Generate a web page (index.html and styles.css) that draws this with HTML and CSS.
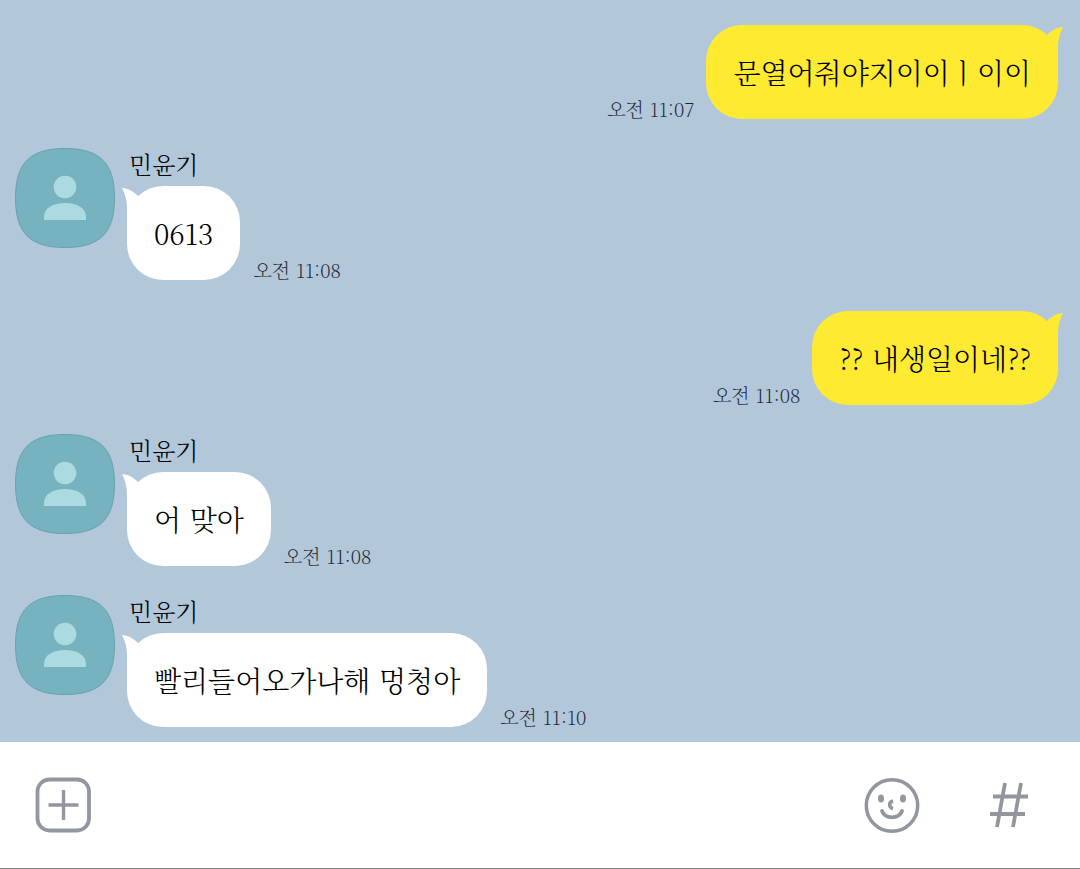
FILE: index.html
```html
<!DOCTYPE html>
<html lang="ko">
<head>
  <meta charset="UTF-8" />
  <meta name="viewport" content="width=device-width, initial-scale=1" />
  <title>민윤기</title>
  <link rel="stylesheet" href="styles.css">
</head>
<body>
  <!-- shared shapes -->
  <svg class="defs" width="0" height="0" aria-hidden="true">
    <symbol id="person" viewBox="0 0 100 100">
      <path d="M50 .5C85 .5 99.5 15 99.5 50S85 99.5 50 99.5S.5 85 .5 50S15 .5 50 .5Z" fill="#76b3bf" stroke="#68a1b0" />
      <circle cx="50" cy="39" r="11.3" fill="#abdae0" />
      <path d="M29 72V69C29 60 38 55 50 55S71 60 71 69V72Z" fill="#abdae0" />
    </symbol>
    <symbol id="tail-left" viewBox="0 0 20 36">
      <path d="M0 0C6 0 12 4 16 8L20 14V36H5V20C5 12 3 6 0 0Z" fill="#fff" />
    </symbol>
    <symbol id="tail-right" viewBox="0 0 20 36">
      <path d="M20 0C14 0 8 4 4 8L0 14V36H15V20C15 12 17 6 20 0Z" fill="#ffea32" />
    </symbol>
  </svg>

  <main class="chat">
    <div class="message mine">
      <time>오전 11:07</time>
      <p class="bubble">문열어줘야지이이ㅣ이이<svg class="tail"><use href="#tail-right" /></svg></p>
    </div>

    <div class="message">
      <svg class="avatar"><use href="#person" /></svg>
      <div class="body">
        <div class="name">민윤기</div>
        <div class="line">
          <p class="bubble">0613<svg class="tail"><use href="#tail-left" /></svg></p>
          <time>오전 11:08</time>
        </div>
      </div>
    </div>

    <div class="message mine">
      <time>오전 11:08</time>
      <p class="bubble">?? 내생일이네??<svg class="tail"><use href="#tail-right" /></svg></p>
    </div>

    <div class="message">
      <svg class="avatar"><use href="#person" /></svg>
      <div class="body">
        <div class="name">민윤기</div>
        <div class="line">
          <p class="bubble">어 맞아<svg class="tail"><use href="#tail-left" /></svg></p>
          <time>오전 11:08</time>
        </div>
      </div>
    </div>

    <div class="message">
      <svg class="avatar"><use href="#person" /></svg>
      <div class="body">
        <div class="name">민윤기</div>
        <div class="line">
          <p class="bubble">빨리들어오가나해 멍청아<svg class="tail"><use href="#tail-left" /></svg></p>
          <time>오전 11:10</time>
        </div>
      </div>
    </div>
  </main>

  <footer class="toolbar">
    <button type="button" aria-label="추가">
      <svg viewBox="0 0 56 56">
        <rect x="2.5" y="2.5" width="51.5" height="51" rx="12" stroke-width="3.8" />
        <path d="M28.5 13V43M13.5 28H43.5" stroke-width="3.4" />
      </svg>
    </button>
    <button type="button" class="emoji" aria-label="이모티콘">
      <svg viewBox="0 0 56 56">
        <circle cx="28" cy="28.5" r="25.7" stroke-width="3.5" />
        <ellipse cx="17" cy="21.5" rx="3" ry="4" class="eye" />
        <ellipse cx="39" cy="21.5" rx="3" ry="4" class="eye" />
        <path d="M29 24C24.5 25 24.5 30.5 29 31.5" stroke-width="3.5" />
        <path d="M18 34C21.5 42.500 34.500 42.500 38 34" stroke-width="3.8" stroke-linecap="round" />
      </svg>
    </button>
    <button type="button" aria-label="샵검색">
      <svg viewBox="0 0 56 56">
        <path d="M24 6L16 50M40 6L32 50M12 19.5H47M9 37H44" stroke-width="3.8" />
      </svg>
    </button>
  </footer>
</body>
</html>
```
FILE: styles.css
```css
* {
  box-sizing: border-box;
}

body {
  margin: 0;
  min-height: 100vh;
  display: flex;
  flex-direction: column;
  background: #b2c7da;
  color: #000;
  font-family: "Noto Serif CJK KR", "Noto Sans CJK KR", serif;
  font-weight: 300;
}

.defs {
  position: absolute;
}

.chat {
  flex: 1;
  display: flex;
  flex-direction: column;
  gap: 29px;
  padding: 23px 22px 15px 15px;
}

.message {
  display: flex;
  gap: 12px;
}

.mine {
  justify-content: flex-end;
  align-items: flex-end;
  padding-top: 2px;
}

.avatar {
  flex: none;
  width: 100px;
  height: 100px;
}

.name {
  margin-bottom: 6px;
  padding-left: 2px;
  font-size: 24px;
  line-height: 32px;
}

.line {
  display: flex;
  align-items: flex-end;
  gap: 13px;
}

.bubble {
  position: relative;
  margin: 0;
  padding: 27px;
  border-radius: 36px;
  background: #fff;
  font-size: 28px;
  line-height: 40px;
}

.mine .bubble {
  background: #ffea32;
}

/* little hook on the upper corner */
.tail {
  position: absolute;
  top: 2px;
  left: -5px;
  width: 20px;
  height: 36px;
}

.mine .tail {
  left: auto;
  right: -5px;
}

time {
  flex: none;
  color: #1c2630;
  font-size: 19px;
  font-weight: 200;
  line-height: 20px;
}

.toolbar {
  display: flex;
  align-items: center;
  gap: 61px;
  padding: 35px 43px 35px 35px;
  border-bottom: 1px solid #808080;
  background: #fff;
}

.toolbar button {
  padding: 0;
  border: 0;
  background: none;
  cursor: pointer;
}

.toolbar svg {
  display: block;
  width: 56px;
  height: 56px;
  fill: none;
  stroke: #92969f;
}

.toolbar .eye {
  fill: #92969f;
  stroke: none;
}

.emoji {
  margin-left: auto;
}
```
